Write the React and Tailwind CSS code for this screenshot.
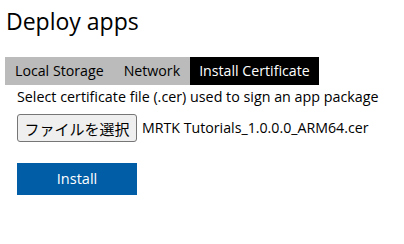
export default function App() {
  const font = { fontFamily: '"Open Sans", "Noto Sans CJK JP", sans-serif' };
  return (
    <div className="w-[404px] h-[244px] bg-white text-black px-[5px] pt-[6px]" style={font}>
      <h1 className="text-[23px] leading-[30px] font-normal pl-[1px]">Deploy apps</h1>
      <div className="mt-[21px] flex w-fit h-[28px] bg-[#bbbbbb] text-[14.2px] leading-[28px]">
        <div className="px-[10px]">Local Storage</div>
        <div className="px-[10px]">Network</div>
        <div className="px-[9px] bg-black text-white">Install Certificate</div>
      </div>
      <div className="pl-[12px]">
        <p className="text-[14.3px] leading-[24px] mt-0">Select certificate file (.cer) used to sign an app package</p>
        <div className="flex items-center mt-[5px] gap-[5px] text-[14.2px]">
          <button className="h-[28px] w-[120px] rounded-[3px] border border-[#767676] bg-[#efefef] text-[15px] leading-none" style={{ fontFamily: '"Noto Sans CJK JP", sans-serif' }}>ファイルを選択</button>
          <span>MRTK Tutorials_1.0.0.0_ARM64.cer</span>
        </div>
        <button className="mt-[21px] h-[32px] w-[120px] bg-[#005da6] text-white text-[14.5px]">Install</button>
      </div>
    </div>
  );
}
